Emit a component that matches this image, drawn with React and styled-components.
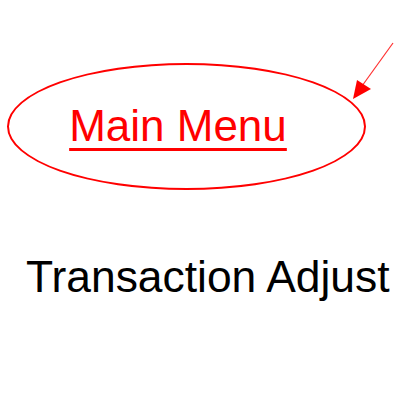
import React from 'react'
import styled, { createGlobalStyle } from 'styled-components'

const GlobalStyle = createGlobalStyle`
  html, body {
    margin: 0;
    padding: 0;
    background: #ffffff;
  }
  body {
    font-family: "Liberation Sans", Arial, sans-serif;
  }
`

const Page = styled.div`
  position: relative;
  width: 400px;
  height: 400px;
  display: flex;
  flex-direction: column;
  align-items: flex-start;
  padding-top: 63px;
  box-sizing: border-box;
  overflow: hidden;
`

const Oval = styled.div`
  margin-left: 7px;
  width: 359px;
  height: 127px;
  box-sizing: border-box;
  border: 2px solid #ff0000;
  border-radius: 50%;
  display: flex;
  align-items: center;
  justify-content: center;
  padding-right: 17px;
  padding-bottom: 1px;
`

const MenuLink = styled.a`
  color: #ff0000;
  font-size: 44px;
  line-height: 1;
  text-decoration: underline;
  text-decoration-thickness: 3px;
  text-underline-offset: 7px;
  cursor: pointer;
`

const Title = styled.div`
  margin-top: 65px;
  margin-left: 26px;
  color: #000000;
  font-size: 44.4px;
  line-height: 1;
  white-space: nowrap;
`

const Pointer = styled.svg`
  position: absolute;
  left: 340px;
  top: 30px;
`

const Arrow = () => (
  <Pointer width="60" height="80" viewBox="0 0 60 80">
    <line x1="53" y1="13" x2="22" y2="56" stroke="#ff3030" strokeWidth="1.2" />
    <polygon points="13,69 17,50 31,59" fill="#ff0000" />
  </Pointer>
)

const App = () => {
  return (
    <>
      <GlobalStyle />
      <Page>
        <Oval>
          <MenuLink>Main Menu</MenuLink>
        </Oval>
        <Title>Transaction Adjust</Title>
        <Arrow />
      </Page>
    </>
  )
}

export default App
